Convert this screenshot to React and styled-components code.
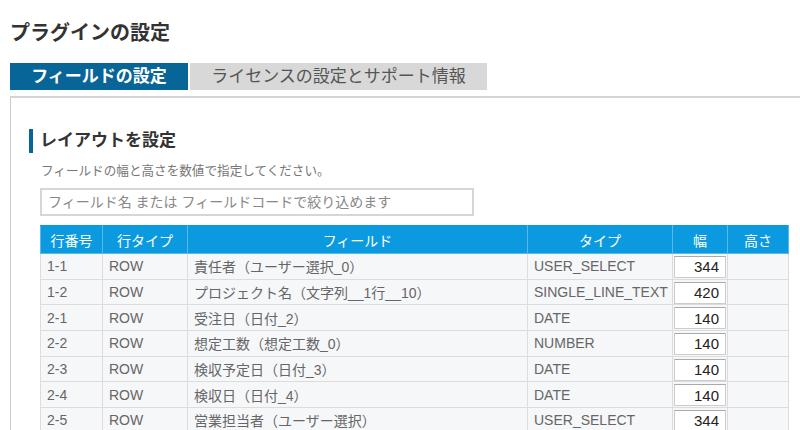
import React, { useState } from "react";
import styled, { createGlobalStyle } from "styled-components";

const GlobalStyle = createGlobalStyle`
  body {
    margin: 0;
    background: #fff;
    font-family: "Liberation Sans", "Noto Sans CJK JP", sans-serif;
  }
`;

const rows = [
  { no: "1-1", type: "ROW", field: "責任者（ユーザー選択_0）", ftype: "USER_SELECT", width: "344" },
  { no: "1-2", type: "ROW", field: "プロジェクト名（文字列__1行__10）", ftype: "SINGLE_LINE_TEXT", width: "420" },
  { no: "2-1", type: "ROW", field: "受注日（日付_2）", ftype: "DATE", width: "140" },
  { no: "2-2", type: "ROW", field: "想定工数（想定工数_0）", ftype: "NUMBER", width: "140" },
  { no: "2-3", type: "ROW", field: "検収予定日（日付_3）", ftype: "DATE", width: "140" },
  { no: "2-4", type: "ROW", field: "検収日（日付_4）", ftype: "DATE", width: "140" },
  { no: "2-5", type: "ROW", field: "営業担当者（ユーザー選択）", ftype: "USER_SELECT", width: "344" },
];

const columns = [
  { label: "行番号", width: 62 },
  { label: "行タイプ", width: 85 },
  { label: "フィールド", width: 340 },
  { label: "タイプ", width: 145 },
  { label: "幅", width: 55 },
  { label: "高さ", width: 61 },
];

const App = () => {
  const [filter, setFilter] = useState("");
  const [widths, setWidths] = useState(rows.map((r) => r.width));

  return (
    <Page>
      <GlobalStyle />
      <Title>プラグインの設定</Title>
      <Tabs>
        <Tab active>フィールドの設定</Tab>
        <Tab>ライセンスの設定とサポート情報</Tab>
      </Tabs>
      <Panel>
        <Heading>レイアウトを設定</Heading>
        <Description>フィールドの幅と高さを数値で指定してください。</Description>
        <Search
          placeholder="フィールド名 または フィールドコードで絞り込めます"
          value={filter}
          onChange={(e) => setFilter(e.target.value)}
        />
        <Table>
          <colgroup>
            {columns.map((c) => (
              <col key={c.label} style={{ width: c.width }} />
            ))}
          </colgroup>
          <thead>
            <tr>
              {columns.map((c) => (
                <HeadCell key={c.label}>{c.label}</HeadCell>
              ))}
            </tr>
          </thead>
          <tbody>
            {rows.map((r, i) => (
              <tr key={r.no}>
                <Cell>{r.no}</Cell>
                <Cell>{r.type}</Cell>
                <Cell>{r.field}</Cell>
                <Cell>{r.ftype}</Cell>
                <InputCell>
                  <SizeInput
                    value={widths[i]}
                    onChange={(e) => {
                      const next = [...widths];
                      next[i] = e.target.value;
                      setWidths(next);
                    }}
                  />
                </InputCell>
                <Cell />
              </tr>
            ))}
          </tbody>
        </Table>
      </Panel>
    </Page>
  );
};

export default App;

const Page = styled.div`
  box-sizing: border-box;
  height: 430px;
  overflow: hidden;
  padding: 20px 0 0 10px;
`;

const Title = styled.h1`
  margin: 0;
  font-size: 20px;
  line-height: 26px;
  font-weight: bold;
  color: #333;
`;

const Tabs = styled.div`
  display: flex;
  gap: 2px;
  margin-top: 17px;
`;

const Tab = styled.div`
  box-sizing: border-box;
  width: ${(p) => (p.active ? "178px" : "297px")};
  height: 27px;
  line-height: 27px;
  font-size: 17px;
  font-weight: ${(p) => (p.active ? "bold" : "normal")};
  color: ${(p) => (p.active ? "#fff" : "#555")};
  background: ${(p) => (p.active ? "#086597" : "#d8d8d8")};
  text-align: center;
`;

const Panel = styled.div`
  margin-top: 6px;
  width: 789px;
  border-left: 1px solid #ccc;
  border-top: 2px solid #d4d4d4;
  padding: 31px 0 0 29px;
`;

const Heading = styled.h2`
  margin: 0 0 0 -11px;
  padding-left: 7px;
  border-left: 4px solid #086597;
  height: 24px;
  line-height: 24px;
  font-size: 17px;
  font-weight: bold;
  color: #333;
`;

const Description = styled.p`
  margin: 10px 0 0 1px;
  font-size: 12.6px;
  line-height: 16px;
  color: #777;
`;

const Search = styled.input`
  display: block;
  box-sizing: border-box;
  margin-top: 9px;
  width: 434px;
  height: 28px;
  border: 2px solid #d6d6d6;
  padding: 0 6px;
  font-family: inherit;
  font-size: 14px;
  color: #333;
  outline: none;
  &::placeholder {
    color: #888;
  }
`;

const Table = styled.table`
  margin-top: 9px;
  width: 748px;
  border-collapse: collapse;
  table-layout: fixed;
`;

const HeadCell = styled.th`
  height: 27px;
  padding: 0;
  background: #0b9ae0;
  color: #fff;
  font-size: 14px;
  font-weight: normal;
  text-align: center;
  border: 1px solid #5bb8e8;
  border-top-color: #0b9ae0;
`;

const Cell = styled.td`
  height: 24.7px;
  padding: 0 6px;
  background: #f6f7f9;
  border: 1px solid #dcdcdc;
  font-size: 14px;
  color: #666;
  white-space: nowrap;
  overflow: hidden;
`;

const InputCell = styled(Cell)`
  padding: 0 1px;
`;

const SizeInput = styled.input`
  display: block;
  box-sizing: border-box;
  width: 52px;
  height: 22px;
  margin: 1px 0 0;
  border: 1px solid #ccc;
  border-top-color: #aaa;
  background: #fff;
  padding: 0 6px;
  text-align: right;
  font-family: inherit;
  font-size: 15px;
  color: #222;
  outline: none;
`;
